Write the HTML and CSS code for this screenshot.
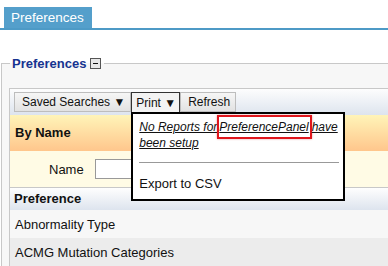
FILE: index.html
```html
<!DOCTYPE html>
<html lang="en">

<head>
    <meta charset="UTF-8">
    <title>Preferences</title>
    <link rel="stylesheet" href="styles.css">
</head>

<body>
    <div class="tabs">
        <span class="tab">Preferences</span>
    </div>

    <fieldset class="section">
        <legend>Preferences <span class="toggle"></span></legend>

        <div class="panel">
            <div class="toolbar">
                <button type="button" class="btn">Saved Searches &#9660;</button>
                <div class="drop">
                    <button type="button" class="btn active">Print &#9660;</button>
                    <div class="menu">
                        <a class="note">No Reports for<span class="mark">PreferencePanel</span>have<br>been setup</a>
                        <hr>
                        <div class="item">Export to CSV</div>
                    </div>
                </div>
                <button type="button" class="btn">Refresh</button>
            </div>

            <div class="search-head">By Name</div>
            <div class="search-row">
                <label>Name</label>
                <input type="text" class="field">
            </div>

            <div class="grid-head">Preference</div>
            <div class="row">Abnormality Type</div>
            <div class="row alt">ACMG Mutation Categories</div>
        </div>
    </fieldset>
</body>

</html>
```

FILE: styles.css
```css
body {
    margin: 0;
    font-family: "Liberation Sans", Arial, sans-serif;
    font-size: 13px;
    color: #111;
    background: #fff;
    overflow: hidden;
}

.tabs {
    padding: 7px 0 0 4px;
    height: 21px;
    border-bottom: 2px solid #4d9ac6;
}

.tab {
    display: inline-block;
    height: 21px;
    line-height: 22px;
    padding: 0 8px 0 7px;
    background-color: #549fcb;
    color: #fff;
    font-size: 13.5px;
}

.section {
    margin: 26px -40px 0 1px;
    padding: 17px 0 0 7px;
    border: 1px solid #c8c8c8;
    border-right: none;
    background-color: #f7f7f7;
}

.section legend {
    padding: 0 3px 0 2px;
    margin-left: 1px;
    color: #163390;
    font-weight: bold;
    font-size: 13px;
}

.toggle {
    display: inline-block;
    position: relative;
    width: 9px;
    height: 9px;
    vertical-align: -1px;
    border: 1px solid #555;
    background-color: #e8e8e8;
}

.toggle::after {
    content: "";
    position: absolute;
    left: 2px;
    top: 4px;
    width: 5px;
    height: 1px;
    background-color: #111;
}

.panel {
    border-top: 1px solid #c8c8c8;
    border-left: 1px solid #c8c8c8;
}

.toolbar {
    display: flex;
    height: 26px;
    padding: 3px 0 0 4px;
    box-sizing: border-box;
    background: linear-gradient(#fdfdfd, #dde4ee);
}

.btn {
    height: 20px;
    padding: 0 5px 0 7px;
    margin: 0;
    border: 1px solid #bdbdbd;
    background: linear-gradient(#f6f6f6, #e2e2e2);
    font-family: "Liberation Sans", Arial, sans-serif;
    font-size: 12px;
    color: #111;
}

.btn.active {
    border-color: #333;
    border-bottom: none;
    background: #f3f3f3;
    padding: 0 3px 0 4px;
}

.drop {
    position: relative;
}

.menu {
    position: absolute;
    left: 0;
    top: 20px;
    width: 204px;
    height: 80px;
    padding: 5px 0 0 6px;
    border: 2px solid #000;
    background-color: #fff;
    z-index: 2;
}

.note {
    display: block;
    line-height: 16px;
    white-space: nowrap;
    font-style: italic;
    text-decoration: underline;
    font-size: 12px;
    color: #111;
}

.mark {
    border: 2px solid #e0161c;
    padding: 3px 1px 3px 0;
    box-shadow: 0 0 2px rgba(200, 0, 0, 0.4);
}

.menu hr {
    width: 200px;
    margin: 11px 0 0 0;
    border: none;
    border-top: 1px solid #999;
}

.item {
    margin-top: 13px;
    font-size: 13px;
}

.search-head {
    height: 36px;
    line-height: 36px;
    padding-left: 5px;
    font-weight: bold;
    background: linear-gradient(#fff4b8, #ffc68c);
}

.search-row {
    display: flex;
    align-items: center;
    height: 36px;
    padding-left: 39px;
    background-color: #fffbe5;
    border-bottom: 1px solid #c8c8c8;
}

.search-row label {
    width: 46px;
}

.field {
    width: 200px;
    height: 18px;
    border: 1px solid #999;
    padding: 0;
}

.grid-head {
    height: 22px;
    line-height: 22px;
    padding-left: 4px;
    font-weight: bold;
    background: linear-gradient(#fefefe, #dde4ee);
}

.row {
    height: 28px;
    line-height: 29px;
    padding-left: 5px;
    background-color: #f7f7f7;
}

.row.alt {
    background-color: #ececec;
}
```
